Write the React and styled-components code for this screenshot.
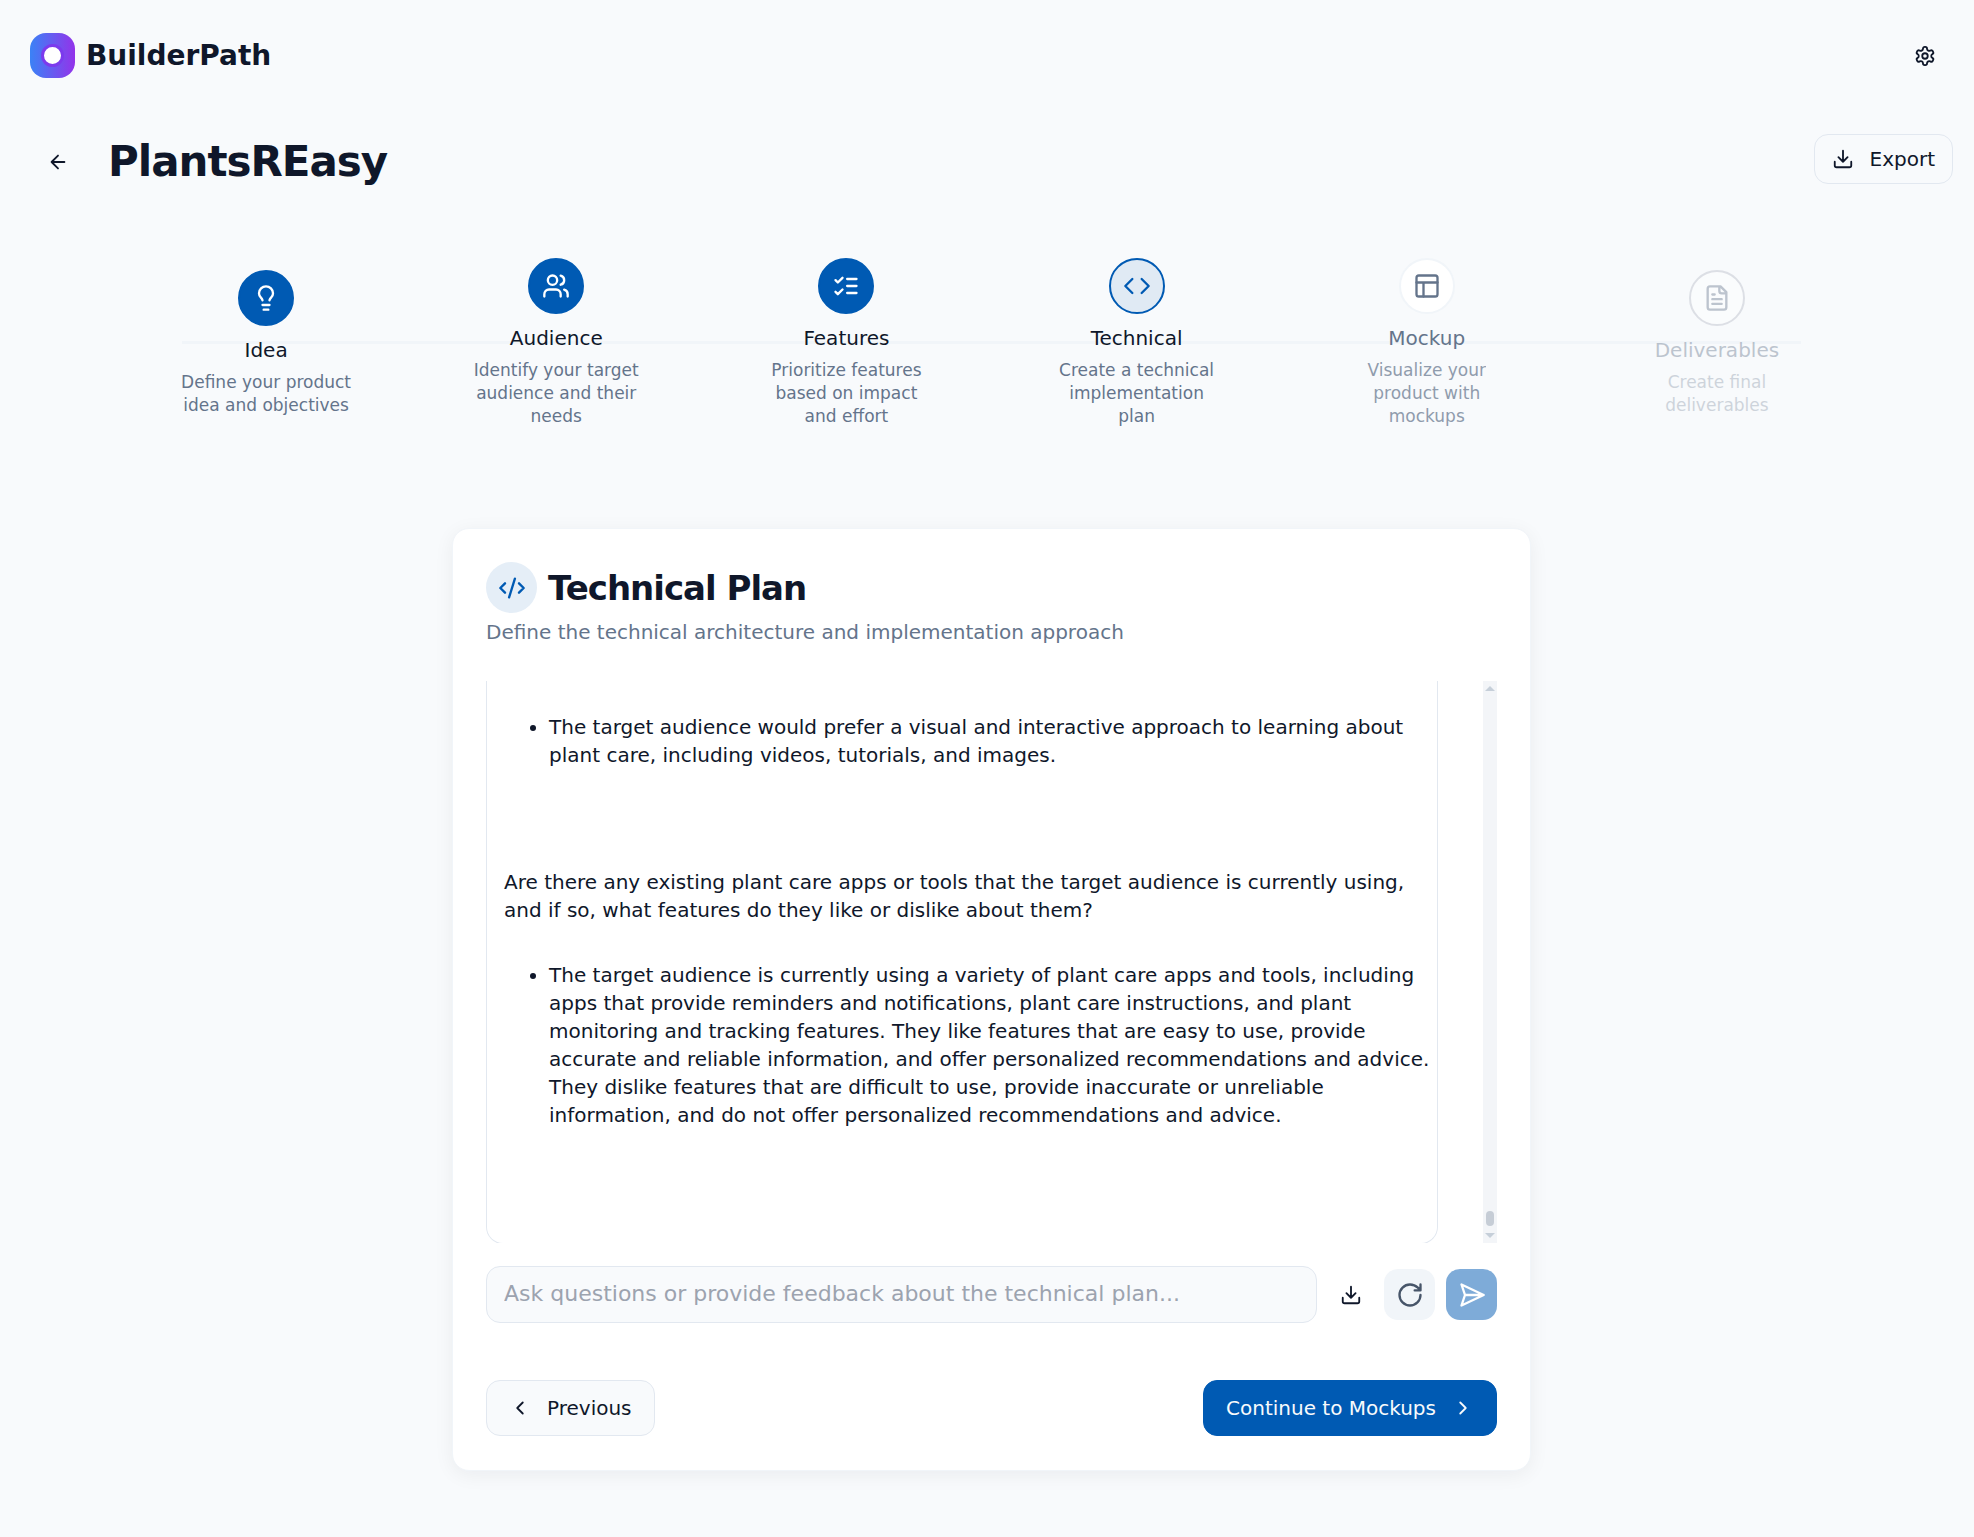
import React from "react";
import styled, { createGlobalStyle } from "styled-components";

const color = {
  page: "#f8fafc",
  card: "#ffffff",
  ink: "#0f172a",
  muted: "#64748b",
  line: "#e2e8f0",
  track: "#f1f5f9",
  primary: "#005ab3",
};

const GlobalStyle = createGlobalStyle`
  *, *::before, *::after { box-sizing: border-box; }
  body {
    margin: 0;
    background: ${color.page};
    color: ${color.ink};
    font-family: "DejaVu Sans", sans-serif;
    font-size: 20px;
    line-height: 28px;
  }
  h1, h2, h3, p, ul, ol { margin: 0; padding: 0; }
  button, input { font: inherit; color: inherit; }
  button { cursor: pointer; }
`;

/* ---------- icons ---------- */

const Svg = styled.svg`
  display: block;
  flex: none;
  width: ${(p) => p.$size}px;
  height: ${(p) => p.$size}px;
  fill: none;
  stroke: currentColor;
  stroke-width: 2;
  stroke-linecap: round;
  stroke-linejoin: round;
`;

const shapes = {
  settings: (
    <>
      <path d="M12.22 2h-.44a2 2 0 0 0-2 2v.18a2 2 0 0 1-1 1.73l-.43.25a2 2 0 0 1-2 0l-.15-.08a2 2 0 0 0-2.73.73l-.22.38a2 2 0 0 0 .73 2.73l.15.1a2 2 0 0 1 1 1.72v.51a2 2 0 0 1-1 1.74l-.15.09a2 2 0 0 0-.73 2.73l.22.38a2 2 0 0 0 2.73.73l.15-.08a2 2 0 0 1 2 0l.43.25a2 2 0 0 1 1 1.73V20a2 2 0 0 0 2 2h.44a2 2 0 0 0 2-2v-.18a2 2 0 0 1 1-1.73l.43-.25a2 2 0 0 1 2 0l.15.08a2 2 0 0 0 2.73-.73l.22-.39a2 2 0 0 0-.73-2.73l-.15-.08a2 2 0 0 1-1-1.74v-.5a2 2 0 0 1 1-1.74l.15-.09a2 2 0 0 0 .73-2.73l-.22-.38a2 2 0 0 0-2.73-.73l-.15.08a2 2 0 0 1-2 0l-.43-.25a2 2 0 0 1-1-1.73V4a2 2 0 0 0-2-2z" />
      <circle cx="12" cy="12" r="3" />
    </>
  ),
  arrowLeft: <path d="m12 19-7-7 7-7M19 12H5" />,
  download: <path d="M21 15v4a2 2 0 0 1-2 2H5a2 2 0 0 1-2-2v-4M7 10l5 5 5-5M12 15V3" />,
  bulb: (
    <path d="M15 14c.2-1 .7-1.7 1.5-2.5 1-.9 1.5-2.2 1.5-3.5A6 6 0 0 0 6 8c0 1 .2 2.2 1.5 3.5.7.7 1.3 1.5 1.5 2.5M9 18h6M10 22h4" />
  ),
  users: (
    <>
      <path d="M16 21v-2a4 4 0 0 0-4-4H6a4 4 0 0 0-4 4v2" />
      <circle cx="9" cy="7" r="4" />
      <path d="M22 21v-2a4 4 0 0 0-3-3.87M16 3.13a4 4 0 0 1 0 7.75" />
    </>
  ),
  checks: <path d="m3 17 2 2 4-4M3 7l2 2 4-4M13 6h8M13 12h8M13 18h8" />,
  code: <path d="m16 18 6-6-6-6M8 6l-6 6 6 6" />,
  layout: (
    <>
      <rect x="3" y="3" width="18" height="18" rx="2" />
      <path d="M3 9h18M9 21V9" />
    </>
  ),
  file: (
    <path d="M15 2H6a2 2 0 0 0-2 2v16a2 2 0 0 0 2 2h12a2 2 0 0 0 2-2V7ZM14 2v4a2 2 0 0 0 2 2h4M10 9H8M16 13H8M16 17H8" />
  ),
  codeSlash: <path d="m18 16 4-4-4-4M6 8l-4 4 4 4M14.5 4l-5 16" />,
  rotate: <path d="M21 12a9 9 0 1 1-9-9c2.52 0 4.93 1 6.74 2.74L21 8M21 3v5h-5" />,
  send: <path d="m3 3 3 9-3 9 19-9ZM6 12h16" />,
  left: <path d="m15 18-6-6 6-6" />,
  right: <path d="m9 18 6-6-6-6" />,
};

function Icon({ name, size = 22 }) {
  return (
    <Svg $size={size} viewBox="0 0 24 24" aria-hidden="true">
      {shapes[name]}
    </Svg>
  );
}

/* ---------- page frame ---------- */

const Header = styled.header`
  display: flex;
  align-items: center;
  justify-content: space-between;
  padding: 33px 30px;
`;

const Brand = styled.a`
  display: flex;
  align-items: center;
  gap: 11px;
  color: inherit;
  font-size: 28px;
  font-weight: 700;
  text-decoration: none;
`;

const Mark = styled.span`
  display: grid;
  place-items: center;
  width: 45px;
  height: 45px;
  border-radius: 16px;
  background: linear-gradient(to right, #3b82f6, #9333ea);

  &::after {
    content: "";
    width: 23px;
    height: 23px;
    border: 3px solid #7c3aed;
    border-radius: 50%;
    background: #ffffff;
  }
`;

const GhostButton = styled.button`
  display: grid;
  place-items: center;
  width: ${(p) => p.$width}px;
  height: 44px;
  padding: 0;
  border: 0;
  border-radius: 14px;
  background: transparent;
`;

const Main = styled.main`
  padding: 23px 21px 64px 30px;
`;

const TitleRow = styled.div`
  display: flex;
  align-items: flex-start;
  justify-content: space-between;
`;

const TitleGroup = styled.div`
  display: flex;
  align-items: center;
  gap: 22px;
`;

const ProjectTitle = styled.h1`
  font-size: 42px;
  line-height: 56px;
  letter-spacing: -1px;
`;

const Button = styled.button`
  display: inline-flex;
  align-items: center;
  gap: 16px;
  height: ${(p) => (p.$compact ? 50 : 56)}px;
  padding: 0 ${(p) => (p.$compact ? 17 : 22)}px;
  border: 1px solid ${(p) => (p.$primary ? color.primary : color.line)};
  border-radius: 14px;
  background: ${(p) => (p.$primary ? color.primary : color.page)};
  color: ${(p) => (p.$primary ? "#f8fafc" : color.ink)};
`;

/* ---------- stepper ---------- */

const Steps = styled.ol`
  position: relative;
  display: grid;
  grid-template-columns: repeat(6, 1fr);
  align-items: center;
  margin-top: 68px;
  padding: 0 91px;
  list-style: none;

  &::before {
    content: "";
    position: absolute;
    top: 50%;
    left: 152px;
    right: 152px;
    height: 3px;
    margin-top: -2px;
    background: ${color.track};
  }
`;

const Step = styled.li`
  position: relative;
  display: flex;
  flex-direction: column;
  align-items: center;
  text-align: center;
  opacity: ${(p) => (p.$state === "locked" ? 0.4 : 1)};
`;

const circle = {
  done: `background: ${color.primary}; border-color: ${color.primary}; color: #ffffff;`,
  current: `background: #e0eaf4; border-color: ${color.primary}; color: ${color.primary};`,
  next: `background: #ffffff; border-color: ${color.track}; color: ${color.muted};`,
  locked: `background: #ffffff; border-color: #b4b8c4; color: ${color.muted};`,
};

const StepCircle = styled.span`
  display: grid;
  place-items: center;
  width: 56px;
  height: 56px;
  margin-bottom: 10px;
  border: 2px solid;
  border-radius: 50%;
  ${(p) => circle[p.$state]}
`;

const StepLabel = styled.span`
  margin-bottom: 7px;
  color: ${(p) => (p.$state === "next" || p.$state === "locked" ? color.muted : color.ink)};
`;

const StepText = styled.span`
  max-width: 174px;
  color: ${color.muted};
  font-size: 17px;
  line-height: 23px;
  opacity: ${(p) => (p.$state === "next" || p.$state === "locked" ? 0.7 : 1)};
`;

/* ---------- card ---------- */

const Card = styled.section`
  max-width: 1079px;
  margin: 100px auto 0;
  padding: 33px 33px 34px;
  border: 1px solid ${color.track};
  border-radius: 17px;
  background: ${color.card};
  box-shadow: 0 4px 20px rgba(15, 23, 42, 0.06);
`;

const CardHead = styled.div`
  display: flex;
  align-items: center;
  gap: 11px;
  margin-bottom: 5px;
`;

const CardBadge = styled.span`
  display: grid;
  place-items: center;
  width: 51px;
  height: 51px;
  border-radius: 50%;
  background: #e5eef7;
  color: ${color.primary};
`;

const CardTitle = styled.h2`
  font-size: 34px;
  line-height: 34px;
  letter-spacing: -1px;
`;

const CardLead = styled.p`
  color: ${color.muted};
`;

const Viewport = styled.div`
  display: flex;
  justify-content: space-between;
  height: 562px;
  margin-top: 35px;
  overflow: hidden;
`;

const Plan = styled.div`
  flex: 1;
  height: 563px;
  margin-right: 45px;
  padding: 32px 4px 0 17px;
  border: 1px solid ${color.line};
  border-top: 0;
  border-radius: 0 0 17px 17px;
`;

const Answer = styled.ul`
  margin-bottom: 99px;
  padding-left: 45px;
`;

const Question = styled.p`
  margin-bottom: 37px;
`;

const Scrollbar = styled.div`
  display: flex;
  flex-direction: column;
  align-items: center;
  justify-content: flex-end;
  width: 14px;
  padding: 5px 0;
  background: #f3f5f8;
`;

const Arrow = styled.span`
  border: 5px solid transparent;
  border-top: ${(p) => (p.$up ? "0" : "5px solid #c6cfd9")};
  border-bottom: ${(p) => (p.$up ? "5px solid #c6cfd9" : "0")};
  margin-bottom: ${(p) => (p.$up ? "auto" : "0")};
`;

const Thumb = styled.span`
  width: 8px;
  height: 15px;
  margin-bottom: 7px;
  border-radius: 4px;
  background: #c6cdd6;
`;

const AskRow = styled.form`
  display: flex;
  align-items: center;
  gap: 11px;
  margin-top: 23px;
`;

const AskInput = styled.input`
  flex: 1;
  min-width: 0;
  height: 57px;
  padding: 0 17px 3px;
  border: 1px solid ${color.line};
  border-radius: 14px;
  background: ${color.page};
  font-size: 22px;

  &::placeholder {
    color: #9ca3af;
    opacity: 1;
  }
`;

const SquareButton = styled.button`
  display: grid;
  place-items: center;
  width: 51px;
  height: 51px;
  padding: 0;
  border: 0;
  border-radius: 14px;
  background: ${(p) => (p.$primary ? color.primary : color.track)};
  color: ${(p) => (p.$primary ? "#ffffff" : "#475569")};
  opacity: ${(p) => (p.$primary ? 0.5 : 1)};
`;

const CardFoot = styled.div`
  display: flex;
  justify-content: space-between;
  margin-top: 57px;
`;

const steps = [
  { label: "Idea", text: "Define your product idea and objectives", icon: "bulb", state: "done" },
  { label: "Audience", text: "Identify your target audience and their needs", icon: "users", state: "done" },
  { label: "Features", text: "Prioritize features based on impact and effort", icon: "checks", state: "done" },
  { label: "Technical", text: "Create a technical implementation plan", icon: "code", state: "current" },
  { label: "Mockup", text: "Visualize your product with mockups", icon: "layout", state: "next" },
  { label: "Deliverables", text: "Create final deliverables", icon: "file", state: "locked" },
];

export default function App() {
  return (
    <>
      <GlobalStyle />
      <Header>
        <Brand href="#">
          <Mark />
          BuilderPath
        </Brand>
        <GhostButton type="button" $width={38} aria-label="Settings">
          <Icon name="settings" />
        </GhostButton>
      </Header>

      <Main>
        <TitleRow>
          <TitleGroup>
            <GhostButton type="button" $width={56} aria-label="Back">
              <Icon name="arrowLeft" />
            </GhostButton>
            <ProjectTitle>PlantsREasy</ProjectTitle>
          </TitleGroup>
          <Button type="button" $compact>
            <Icon name="download" />
            Export
          </Button>
        </TitleRow>

        <Steps>
          {steps.map((s) => (
            <Step key={s.label} $state={s.state} aria-current={s.state === "current" ? "step" : undefined}>
              <StepCircle $state={s.state}>
                <Icon name={s.icon} size={28} />
              </StepCircle>
              <StepLabel $state={s.state}>{s.label}</StepLabel>
              <StepText $state={s.state}>{s.text}</StepText>
            </Step>
          ))}
        </Steps>

        <Card>
          <CardHead>
            <CardBadge>
              <Icon name="codeSlash" size={28} />
            </CardBadge>
            <CardTitle>Technical Plan</CardTitle>
          </CardHead>
          <CardLead>Define the technical architecture and implementation approach</CardLead>

          <Viewport>
            <Plan>
              <Answer>
                <li>
                  The target audience would prefer a visual and interactive approach to learning about
                  plant care, including videos, tutorials, and images.
                </li>
              </Answer>
              <Question>
                Are there any existing plant care apps or tools that the target audience is currently
                using, and if so, what features do they like or dislike about them?
              </Question>
              <Answer>
                <li>
                  The target audience is currently using a variety of plant care apps and tools,
                  including apps that provide reminders and notifications, plant care instructions, and
                  plant monitoring and tracking features. They like features that are easy to use,
                  provide accurate and reliable information, and offer personalized recommendations and
                  advice. They dislike features that are difficult to use, provide inaccurate or
                  unreliable information, and do not offer personalized recommendations and advice.
                </li>
              </Answer>
            </Plan>
            <Scrollbar aria-hidden="true">
              <Arrow $up />
              <Thumb />
              <Arrow />
            </Scrollbar>
          </Viewport>

          <AskRow onSubmit={(e) => e.preventDefault()}>
            <AskInput
              type="text"
              aria-label="Ask about the technical plan"
              placeholder="Ask questions or provide feedback about the technical plan..."
            />
            <GhostButton type="button" $width={45} aria-label="Download plan">
              <Icon name="download" />
            </GhostButton>
            <SquareButton type="button" aria-label="Regenerate">
              <Icon name="rotate" size={28} />
            </SquareButton>
            <SquareButton type="submit" $primary aria-label="Send">
              <Icon name="send" size={28} />
            </SquareButton>
          </AskRow>

          <CardFoot>
            <Button type="button">
              <Icon name="left" />
              Previous
            </Button>
            <Button type="button" $primary>
              Continue to Mockups
              <Icon name="right" />
            </Button>
          </CardFoot>
        </Card>
      </Main>
    </>
  );
}
